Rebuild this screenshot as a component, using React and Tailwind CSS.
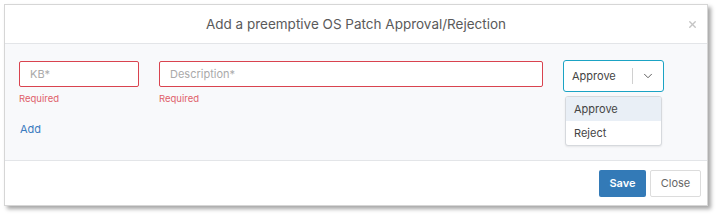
import { ChevronDown, X } from 'lucide-react';

export default function App() {
    return (
        <div className="w-[716px] h-[215px] bg-white pt-[4px] pl-[4px]" style={{ fontFamily: 'Inter, "Noto Sans", sans-serif' }}>
            <div className="w-[704px] h-[202px] bg-white border border-[#d6d6d6] shadow-[3px_3px_4px_rgba(0,0,0,0.35)] flex flex-col">
                {/* Header */}
                <div className="relative h-[39px] flex items-center justify-center border-b border-[#e3e5e8] shrink-0">
                    <span className="text-[13.5px] text-[#5a5a5a]">Add a preemptive OS Patch Approval/Rejection</span>
                    <X size={11} strokeWidth={3} className="absolute right-[9px] top-[14px] text-[#c4c4c4]" />
                </div>

                {/* Body */}
                <div className="h-[117px] bg-[#f8f9fb] border-b border-[#e3e5e8] pt-[17px] pl-[14px] shrink-0">
                    <div className="flex items-start">
                        <div className="w-[120px]">
                            <div className="h-[26px] bg-white border border-[#d9434f] rounded-[2px] flex items-center px-[10px] text-[11px] text-[#aaa]">KB*</div>
                            <div className="mt-[5px] text-[9.5px] text-[#e0606a]">Required</div>
                        </div>
                        <div className="ml-[20px] w-[384px]">
                            <div className="h-[26px] bg-white border border-[#d9434f] rounded-[2px] flex items-center px-[10px] text-[11px] text-[#aaa]">Description*</div>
                            <div className="mt-[5px] text-[9.5px] text-[#e0606a]">Required</div>
                        </div>
                        <div className="relative ml-[20px] -mt-[1px] w-[101px]">
                            <div className="h-[32px] bg-white border border-[#1ba3c4] rounded-[3px] flex items-center pl-[8px] text-[11px] text-[#444]">
                                <span className="flex-1">Approve</span>
                                <div className="w-px h-[16px] bg-[#d0d0d0]" />
                                <div className="w-[30px] flex items-center justify-center">
                                    <ChevronDown size={14} strokeWidth={1.6} className="text-[#555]" />
                                </div>
                            </div>
                            <div className="absolute left-[2px] top-[36px] w-[97px] bg-white border border-[#d6d9dd] rounded-[3px] shadow-[0_1px_2px_rgba(0,0,0,0.08)] text-[11px] text-[#444] overflow-hidden">
                                <div className="h-[24px] bg-[#e9eff6] flex items-center px-[8px]">Approve</div>
                                <div className="h-[24px] flex items-center px-[8px]">Reject</div>
                            </div>
                        </div>
                    </div>
                    <div className="mt-[15px] ml-[1px] text-[11px] text-[#3b7bbf]">Add</div>
                </div>

                {/* Footer */}
                <div className="flex-1 flex items-center justify-end gap-[4px] pr-[6px] pt-[1px]">
                    <button className="h-[27px] w-[47px] bg-[#337ab7] text-white text-[11px] font-semibold rounded-[2px]">Save</button>
                    <button className="h-[27px] w-[51px] bg-white border border-[#dcdcdc] text-[#666] text-[11px] rounded-[2px]">Close</button>
                </div>
            </div>
        </div>
    );
}
